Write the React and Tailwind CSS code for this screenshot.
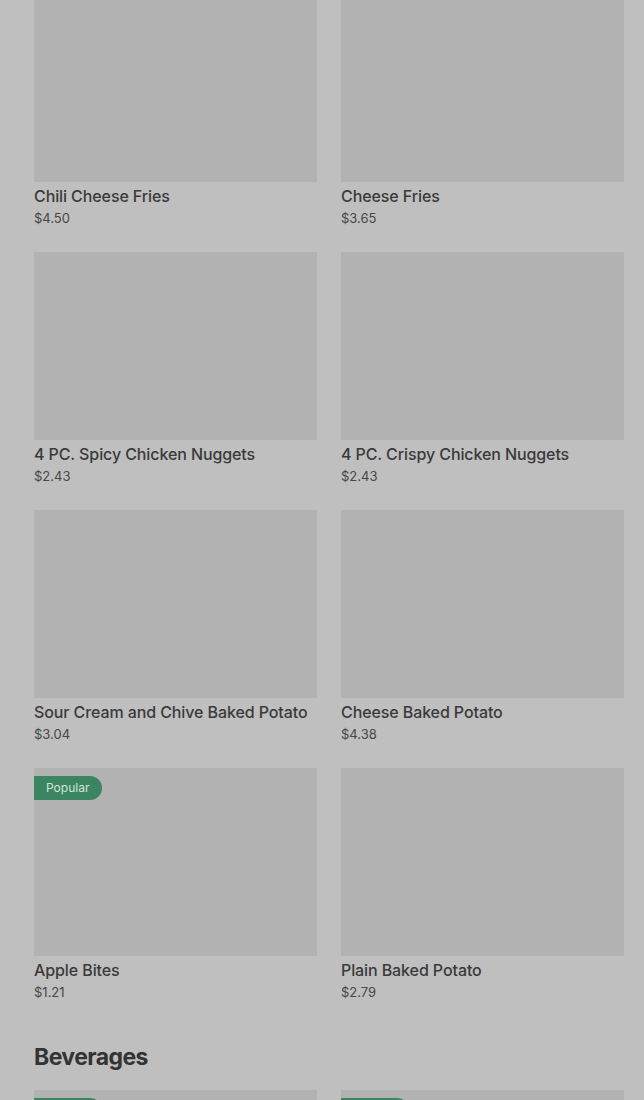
const items = [
  { name: 'Chili Cheese Fries', price: '$4.50' },
  { name: 'Cheese Fries', price: '$3.65' },
  { name: '4 PC. Spicy Chicken Nuggets', price: '$2.43' },
  { name: '4 PC. Crispy Chicken Nuggets', price: '$2.43' },
  { name: 'Sour Cream and Chive Baked Potato', price: '$3.04' },
  { name: 'Cheese Baked Potato', price: '$4.38' },
  { name: 'Apple Bites', price: '$1.21', popular: true },
  { name: 'Plain Baked Potato', price: '$2.79' },
];

const beverages = [
  { name: 'Coca-Cola', price: '$1.99', popular: true },
  { name: 'Sprite', price: '$1.99', popular: true },
];

const Badge = () => (
  <span className="absolute left-0 top-2 flex h-6 w-[68px] items-center rounded-r-full bg-[#3b8660] pl-3 text-xs text-[#d3e3d9]">
    Popular
  </span>
);

const ItemCard = ({ item }) => (
  <div className="flex flex-col">
    <div className="relative h-[188px] bg-[#b2b2b2]">{item.popular && <Badge />}</div>
    <p className="mt-[3px] text-base font-medium leading-[22px] tracking-[-0.1px] text-[#3a3a3a]">{item.name}</p>
    <p className="text-[13px] leading-[22px] text-[#474747]">{item.price}</p>
  </div>
);

export default function App() {
  return (
    <div
      className="h-[1100px] overflow-hidden bg-[#bfbfbf] pl-[34px] pr-[20px]"
      style={{ fontFamily: 'Inter, "Liberation Sans", sans-serif' }}
    >
      <div className="-mt-[6px] grid grid-cols-2 gap-x-6 gap-y-[23px]">
        {items.map((item) => (
          <ItemCard key={item.name} item={item} />
        ))}
      </div>

      <h2 className="mt-[38px] text-[23px] font-bold leading-8 tracking-tight text-[#333333]">Beverages</h2>

      <div className="mt-[17px] grid grid-cols-2 gap-x-6 gap-y-[23px]">
        {beverages.map((item) => (
          <ItemCard key={item.name} item={item} />
        ))}
      </div>
    </div>
  );
}
